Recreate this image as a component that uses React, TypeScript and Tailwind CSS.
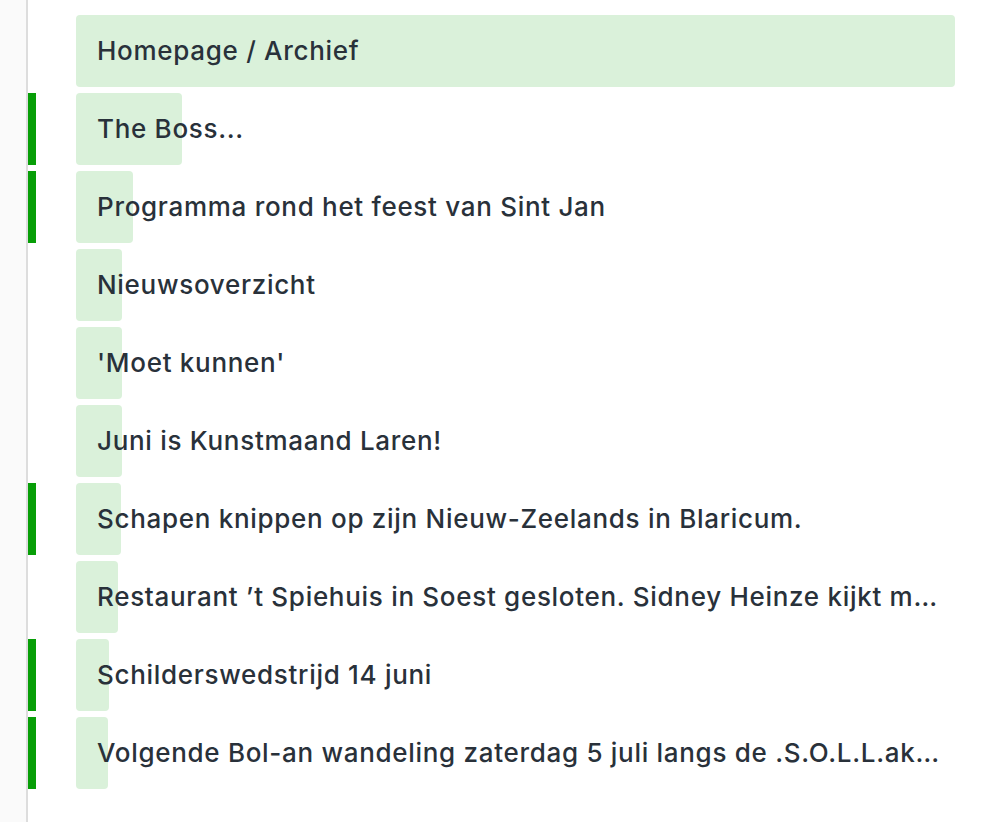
import React from "react";

const rows: { title: string; bar: boolean; w: number }[] = [
  { title: "Homepage / Archief", bar: false, w: 879 },
  { title: "The Boss...", bar: true, w: 106 },
  { title: "Programma rond het feest van Sint Jan", bar: true, w: 57 },
  { title: "Nieuwsoverzicht", bar: false, w: 46 },
  { title: "'Moet kunnen'", bar: false, w: 46 },
  { title: "Juni is Kunstmaand Laren!", bar: false, w: 46 },
  { title: "Schapen knippen op zijn Nieuw-Zeelands in Blaricum.", bar: true, w: 45 },
  { title: "Restaurant \u2019t Spiehuis in Soest gesloten. Sidney Heinze kijkt mee in de keuken", bar: false, w: 42 },
  { title: "Schilderswedstrijd 14 juni", bar: true, w: 33 },
  { title: "Volgende Bol-an wandeling zaterdag 5 juli langs de .S.O.L.L.akkers", bar: true, w: 32 },
];

export default function App() {
  return (
    <div className="flex h-[822px] w-[1000px] bg-white" style={{ fontFamily: "Inter, 'Noto Sans', sans-serif" }}>
      <div className="w-[28px] shrink-0 bg-[#fafafa] border-r-2 border-[#dddddd]" />
      <div className="flex flex-col gap-[6px] pt-[15px]">
        {rows.map((r, i) => (
          <div key={i} className="flex h-[72px] items-stretch">
            <div className={r.bar ? "w-[8px] bg-[#079e07]" : "w-[8px]"} />
            <div className="relative ml-[40px] w-[879px]">
              <div className="absolute inset-y-0 left-0 rounded-[4px] bg-[#daf1da]" style={{ width: r.w }} />
              <div className="relative flex h-full items-center pl-[21px] pr-[14px]">
                <span className="truncate text-[26px] font-medium tracking-[0.7px] leading-[32px] text-[#29313a]">{r.title}</span>
              </div>
            </div>
          </div>
        ))}
      </div>
    </div>
  );
}
